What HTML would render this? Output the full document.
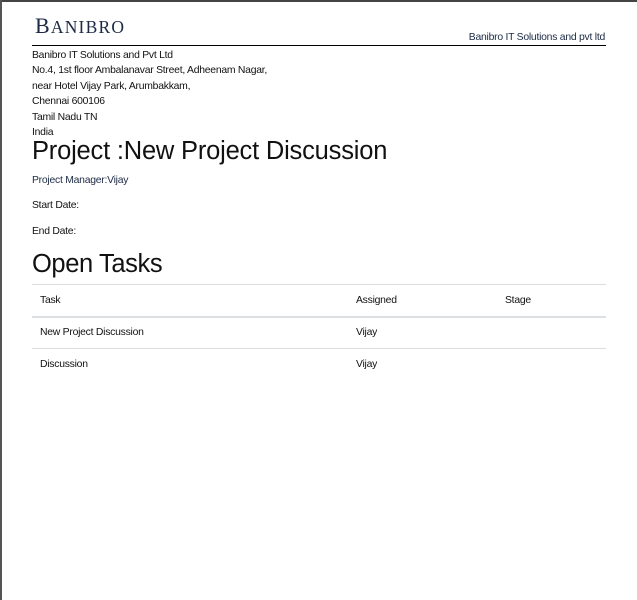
<!DOCTYPE html>
<html><head><meta charset="utf-8"><style>
body{margin:0;width:637px;height:600px;background:#fff;position:relative;overflow:hidden;font-family:"Liberation Sans",sans-serif;color:#111}
.a{position:absolute;white-space:nowrap}
.s{font-size:10.4px;letter-spacing:-0.25px}
</style></head><body>
<div class="a" style="left:0;top:0;width:637px;height:2px;background:#444"></div>
<div class="a" style="left:0;top:0;width:2px;height:600px;background:#555"></div>
<div class="a" style="left:35px;top:13px;font-family:'Liberation Serif',serif;font-size:22px;color:#1c2a44;letter-spacing:1.2px">B<span style="font-size:17.5px">ANIBRO</span></div>
<div class="a s" style="right:32px;top:32px;color:#1c2a44">Banibro IT Solutions and pvt ltd</div>
<div class="a" style="left:32px;top:45px;width:574px;height:1px;background:#000"></div>
<div class="a s" style="left:32px;top:48px;line-height:15.4px">Banibro IT Solutions and Pvt Ltd<br>No.4, 1st floor Ambalanavar Street, Adheenam Nagar,<br>near Hotel Vijay Park, Arumbakkam,<br>Chennai 600106<br>Tamil Nadu TN<br>India</div>
<div class="a" style="left:32px;top:137px;font-size:25.5px;letter-spacing:-0.2px">Project :New Project Discussion</div>
<div class="a s" style="left:32px;top:175px;color:#1c2a44">Project Manager:Vijay</div>
<div class="a s" style="left:32px;top:200px">Start Date:</div>
<div class="a s" style="left:32px;top:226px">End Date:</div>
<div class="a" style="left:32px;top:250px;font-size:25.5px;letter-spacing:-0.4px">Open Tasks</div>
<div class="a" style="left:32px;top:284px;width:574px;height:1px;background:#ddd"></div>
<div class="a s" style="left:40px;top:295px">Task</div>
<div class="a s" style="left:356px;top:295px">Assigned</div>
<div class="a s" style="left:505px;top:295px">Stage</div>
<div class="a" style="left:32px;top:316px;width:574px;height:2px;background:#dde0e3"></div>
<div class="a s" style="left:40px;top:327px">New Project Discussion</div>
<div class="a s" style="left:356px;top:327px">Vijay</div>
<div class="a" style="left:32px;top:348px;width:574px;height:1px;background:#ddd"></div>
<div class="a s" style="left:40px;top:359px">Discussion</div>
<div class="a s" style="left:356px;top:359px">Vijay</div>
</body></html>
